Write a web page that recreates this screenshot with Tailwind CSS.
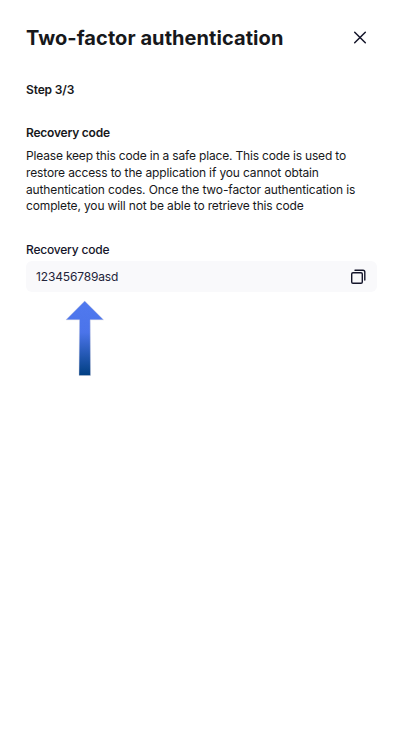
<!DOCTYPE html>
<html lang="en">
<head>
<meta charset="utf-8">
<title>Two-factor authentication</title>
<script src="https://cdn.jsdelivr.net/npm/@tailwindcss/browser@4"></script>
</head>
<body class="bg-white">
<main class="relative h-[747px] w-[403px] overflow-hidden bg-white pl-[26px] pr-[26px] pt-6 font-['Inter',sans-serif] text-[12px] tracking-[-0.145px] text-[#17181b]">
  <header class="flex h-7 items-center justify-between">
    <h1 class="whitespace-nowrap text-[20px] font-bold leading-7 tracking-[0.07px]">Two-factor authentication</h1>
    <button class="mr-2.5 flex size-[14px] items-center justify-center text-[#14152a]" aria-label="Close">
      <svg class="size-[14px]" viewBox="0 0 14 14" fill="none" stroke="currentColor" stroke-width="1.5" stroke-linecap="round"><path d="M1.700 1.200l10.600 10.600M12.300 1.200l-10.600 10.600"/></svg>
    </button>
  </header>
  <p class="mt-[29px] font-semibold leading-[17px]">Step 3/3</p>
  <h2 class="mt-[26px] font-semibold leading-[17px] tracking-[-0.22px]">Recovery code</h2>
  <p class="mt-[7px] whitespace-nowrap leading-[16.8px]"><span class="tracking-[-0.175px]">Please keep this code in a safe place. This code is used to</span><br>restore access to the application if you cannot obtain<br><span class="tracking-[-0.13px]">authentication codes. Once the two-factor authentication is</span><br>complete, you will not be able to retrieve this code</p>
  <label class="mt-[26px] block font-medium leading-[17px] tracking-[-0.2px] text-[#14152a]">Recovery code</label>
  <div class="mt-[3px] flex h-[31px] items-center justify-between rounded-md bg-[#f9f9fb] pl-2.5 pr-[11px] text-[#23243a]">
    <span>123456789asd</span>
    <svg class="size-4 text-[#14152a]" viewBox="0 0 16 16" fill="none" stroke="currentColor" stroke-width="1.4" stroke-linecap="round"><rect x="1.700" y="3.700" width="10.600" height="10.600" rx="1.300"/><path d="M5 1.200h8a1.800 1.800 0 0 1 1.800 1.800v8"/></svg>
  </div>
  <svg class="absolute left-[65px] top-[300px] h-[77px] w-[40px]" viewBox="0 0 40 77"><defs><linearGradient id="g" x1="0" y1="0" x2="0" y2="1"><stop offset="0" stop-color="#5079ef"/><stop offset=".42" stop-color="#4b74ea"/><stop offset="1" stop-color="#003f82"/></linearGradient></defs><path d="M19.700 1L38.500 19.800H25.200L25.500 75.500H14L14.500 19.800H1Z" fill="url(#g)" stroke="#c9c9d8" stroke-width=".4"/></svg>
</main>
</body>
</html>
